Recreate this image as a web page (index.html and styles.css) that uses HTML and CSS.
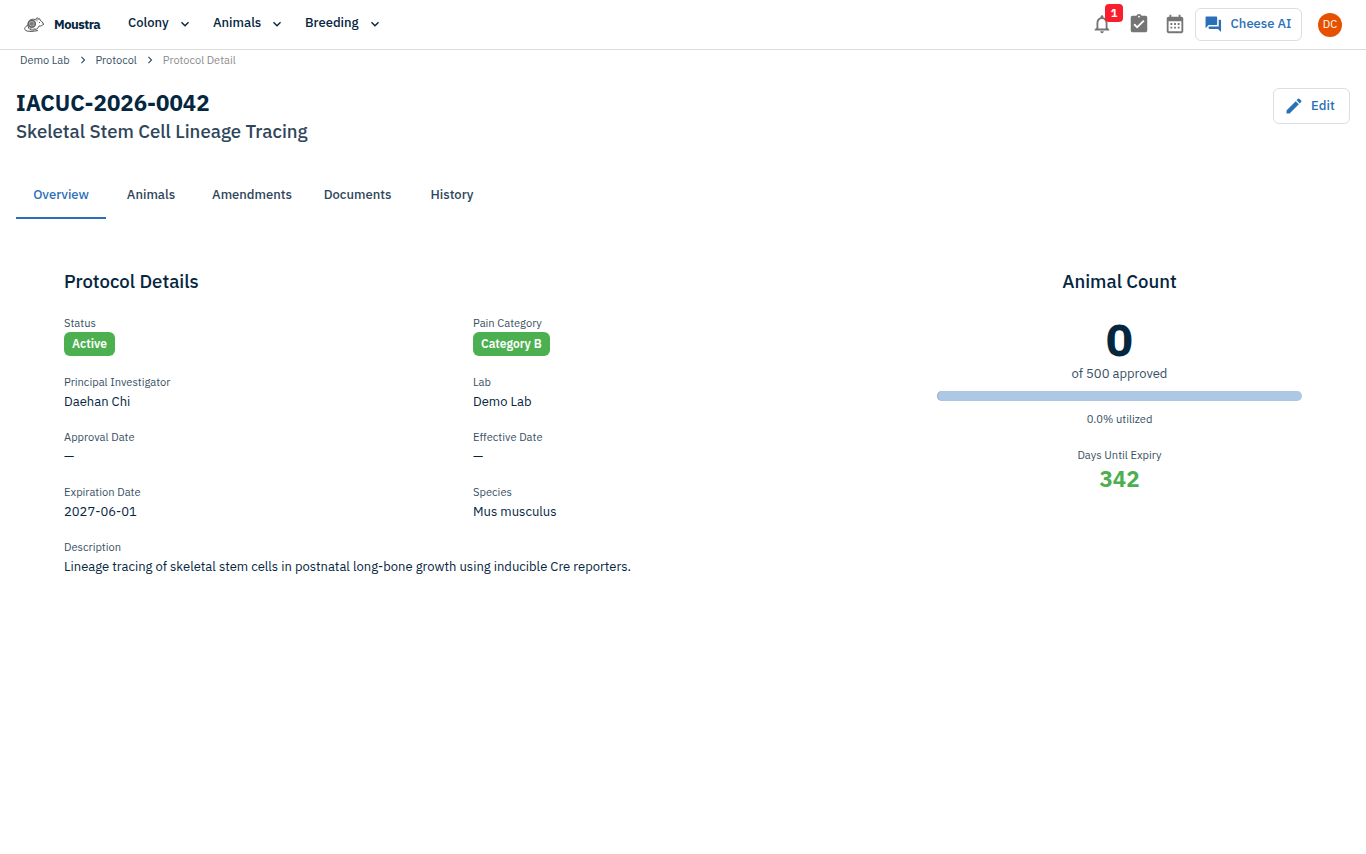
FILE: index.html
```html
<!DOCTYPE html>
<html lang="en">
<head>
    <meta charset="UTF-8">
    <meta name="viewport" content="width=device-width, initial-scale=1.0">
    <title>Protocol Detail - Moustra</title>
    <link rel="stylesheet" href="styles.css">
</head>
<body>
    <header class="navbar">
        <a class="brand" href="#">
            <svg class="logo" viewBox="0 0 20 16" fill="none" stroke="#555" stroke-width="1">
                <path d="M4.200 9.500C3.200 4.500 7 1.200 11 2.500c1.200.3 2 .8 2.500 1.300M14 2.500c.6-1.500 2-1.400 2 .6 1.800 1 3 2.700 3.500 4.200-.9 1.300-2.500 1.700-4.500 1.800-1 2.600-3 3.700-6 3.900-2.500.2-4.500-.8-4.800-3.500M4 8C1 9.500-.2 12 1.500 13.300c2.500 1.700 8 1.200 12.500.2M12 2c.4-1.600 2.300-1.500 2.200.5"/>
                <path d="M5.500 11c2 1.500 4 1.500 6 .3" stroke="#999"/>
                <circle cx="7.800" cy="6.800" r="3.500" fill="#aaa" stroke="#666" stroke-width="1.500"/>
                <circle cx="7.800" cy="6.800" r="1.300" fill="#777" stroke="#777"/>
                <circle cx="15.500" cy="5.500" r=".5" fill="#333" stroke="none"/>
                <circle cx="19.200" cy="7" r=".6" fill="#333" stroke="none"/>
            </svg>
            <span>Moustra</span>
        </a>
        <nav class="menu">
            <button class="menu-item colony">Colony <svg class="chevron" viewBox="0 0 24 24"><path d="M7.410 8.590 12 13.170l4.590-4.580L18 10l-6 6-6-6z"/></svg></button>
            <button class="menu-item animals">Animals <svg class="chevron" viewBox="0 0 24 24"><path d="M7.410 8.590 12 13.170l4.590-4.580L18 10l-6 6-6-6z"/></svg></button>
            <button class="menu-item breeding">Breeding <svg class="chevron" viewBox="0 0 24 24"><path d="M7.410 8.590 12 13.170l4.590-4.580L18 10l-6 6-6-6z"/></svg></button>
        </nav>
        <div class="actions">
            <button class="icon-btn">
                <svg viewBox="0 0 24 24"><path d="M12 22c1.100 0 2-.9 2-2h-4c0 1.100.9 2 2 2m6-6v-5c0-3.070-1.630-5.640-4.500-6.320V4c0-.83-.67-1.500-1.500-1.500s-1.500.67-1.500 1.500v.68C7.640 5.360 6 7.920 6 11v5l-2 2v1h16v-1zm-2 1H8v-6c0-2.480 1.510-4.500 4-4.500s4 2.020 4 4.500z"/></svg>
                <span class="badge">1</span>
            </button>
            <button class="icon-btn">
                <svg viewBox="0 0 24 24"><path d="M19 3h-4.180C14.400 1.840 13.300 1 12 1s-2.400.84-2.820 2H5c-1.100 0-2 .9-2 2v14c0 1.100.9 2 2 2h14c1.100 0 2-.9 2-2V5c0-1.100-.9-2-2-2m-7 0c.55 0 1 .45 1 1s-.45 1-1 1-1-.45-1-1 .45-1 1-1m-2 14-4-4 1.410-1.410L10 14.170l6.590-6.590L18 9z"/></svg>
            </button>
            <button class="icon-btn">
                <svg viewBox="0 0 24 24"><path d="M19 4h-1V2h-2v2H8V2H6v2H5c-1.110 0-2 .9-2 2v14c0 1.100.89 2 2 2h14c1.100 0 2-.9 2-2V6c0-1.100-.9-2-2-2m0 16H5V9h14zM7 11h2v2H7zm4 0h2v2h-2zm4 0h2v2h-2zm-8 4h2v2H7zm4 0h2v2h-2zm4 0h2v2h-2z"/></svg>
            </button>
            <button class="btn cheese">
                <svg viewBox="0 0 24 24"><path d="M21 6h-2v9H6v2c0 .55.45 1 1 1h11l4 4V7c0-.55-.45-1-1-1m-4 6V3c0-.55-.45-1-1-1H3c-.55 0-1 .45-1 1v14l4-4h10c.55 0 1-.45 1-1"/></svg>
                <span>Cheese AI</span>
            </button>
            <div class="avatar">DC</div>
        </div>
    </header>

    <main>
        <div class="breadcrumb">
            <a href="#">Demo Lab</a>
            <svg class="separator" viewBox="0 0 24 24"><path d="M10 6 8.590 7.410 13.170 12l-4.580 4.590L10 18l6-6z"/></svg>
            <a href="#">Protocol</a>
            <svg class="separator" viewBox="0 0 24 24"><path d="M10 6 8.590 7.410 13.170 12l-4.580 4.590L10 18l6-6z"/></svg>
            <span class="current">Protocol Detail</span>
        </div>

        <div class="page-header">
            <div>
                <h1>IACUC-2026-0042</h1>
                <p class="subtitle">Skeletal Stem Cell Lineage Tracing</p>
            </div>
            <button class="btn edit">
                <svg viewBox="0 0 24 24"><path d="M3 17.250V21h3.750L17.810 9.940l-3.750-3.750zM20.710 7.040c.39-.39.39-1.020 0-1.410l-2.340-2.340a.996.996 0 0 0-1.410 0l-1.830 1.830 3.750 3.750z"/></svg>
                <span>Edit</span>
            </button>
        </div>

        <div class="tabs">
            <button class="tab active">Overview</button>
            <button class="tab">Animals</button>
            <button class="tab wide">Amendments</button>
            <button class="tab docs">Documents</button>
            <button class="tab">History</button>
        </div>

        <div class="content">
            <section>
                <h2>Protocol Details</h2>
                <div class="details">
                    <div class="field">
                        <span class="label">Status</span>
                        <span class="chip">Active</span>
                    </div>
                    <div class="field">
                        <span class="label">Pain Category</span>
                        <span class="chip">Category B</span>
                    </div>
                    <div class="field">
                        <span class="label">Principal Investigator</span>
                        <span class="value">Daehan Chi</span>
                    </div>
                    <div class="field">
                        <span class="label">Lab</span>
                        <span class="value">Demo Lab</span>
                    </div>
                    <div class="field">
                        <span class="label">Approval Date</span>
                        <span class="value">—</span>
                    </div>
                    <div class="field">
                        <span class="label">Effective Date</span>
                        <span class="value">—</span>
                    </div>
                    <div class="field">
                        <span class="label">Expiration Date</span>
                        <span class="value">2027-06-01</span>
                    </div>
                    <div class="field">
                        <span class="label">Species</span>
                        <span class="value">Mus musculus</span>
                    </div>
                    <div class="field full">
                        <span class="label">Description</span>
                        <span class="value">Lineage tracing of skeletal stem cells in postnatal long-bone growth using inducible Cre reporters.</span>
                    </div>
                </div>
            </section>

            <section class="count">
                <h2>Animal Count</h2>
                <div class="total">0</div>
                <div class="approved">of 500 approved</div>
                <div class="progress"></div>
                <div class="label utilized">0.0% utilized</div>
                <div class="label expiry">Days Until Expiry</div>
                <div class="days">342</div>
            </section>
        </div>
    </main>
</body>
</html>
```
FILE: styles.css
```css
* {
    box-sizing: border-box;
}
body {
    font-family: "IBM Plex Sans", Roboto, sans-serif;
    margin: 0;
    background: #fff;
    color: #05263f;
    font-size: 13px;
}
h1, h2, p {
    margin: 0;
}
a {
    color: inherit;
    text-decoration: none;
}
button {
    font: inherit;
    color: inherit;
    background: none;
    border: none;
    padding: 0;
    cursor: pointer;
}
svg {
    display: block;
    fill: currentColor;
    flex-shrink: 0;
}
.navbar {
    display: flex;
    align-items: center;
    height: 50px;
    padding: 0 24px;
    border-bottom: 1px solid #dcdcdc;
}
.brand {
    display: flex;
    align-items: center;
    gap: 10px;
    width: 104px;
    font-weight: 700;
    letter-spacing: -0.5px;
}
.logo {
    width: 20px;
    height: 16px;
    fill: none;
}
.menu {
    display: flex;
    padding-bottom: 4px;
}
.menu-item {
    display: flex;
    align-items: center;
    justify-content: space-between;
    font-weight: 500;
}
.menu-item.colony {
    width: 65px;
    margin-right: 20px;
}
.menu-item.animals {
    width: 72px;
    margin-right: 20px;
}
.menu-item.breeding {
    width: 78px;
}
.chevron {
    width: 16px;
    height: 16px;
    position: relative;
    top: 1px;
}
.actions {
    display: flex;
    align-items: center;
    margin-left: auto;
}
.icon-btn {
    position: relative;
    width: 22px;
    height: 22px;
    margin-right: 14px;
    margin-bottom: 1px;
    color: #757575;
}
.icon-btn:first-child {
    margin-right: 15px;
}
.badge {
    position: absolute;
    top: -9px;
    left: 14px;
    width: 18px;
    height: 18px;
    line-height: 18px;
    background: #fa1e2d;
    color: #fff;
    border-radius: 4px;
    font-size: 11px;
    font-weight: 700;
}
.btn {
    display: flex;
    align-items: center;
    border: 1px solid #dadfe5;
    border-radius: 6px;
    color: #2a70b8;
    font-weight: 500;
}
.btn span {
    margin-bottom: 2px;
}
.cheese {
    width: 107px;
    height: 33px;
    margin: 0 16px 0 -5px;
    padding-left: 8px;
    gap: 8px;
}
.cheese svg {
    width: 18.600px;
    height: 18.600px;
}
.avatar {
    width: 24px;
    height: 24px;
    line-height: 23px;
    border-radius: 50%;
    background: #e65100;
    color: #fff;
    font-size: 11.140px;
    text-align: center;
}
main {
    padding: 0 16px;
}
.breadcrumb {
    display: flex;
    align-items: center;
    height: 20px;
    padding-left: 4px;
    color: #374f64;
    font-size: 11px;
}
.separator {
    width: 14px;
    height: 14px;
    margin: 0 6px;
}
.current {
    color: #8c8c8c;
}
.page-header {
    display: flex;
    justify-content: space-between;
    align-items: flex-start;
    height: 101px;
    padding-top: 18px;
}
h1 {
    font-size: 22.300px;
    line-height: 30px;
    font-weight: 700;
}
.subtitle {
    color: #2f465a;
    font-size: 18.570px;
    line-height: 27px;
    font-weight: 500;
}
.edit {
    width: 77px;
    height: 36px;
    padding-left: 10px;
    gap: 7px;
    letter-spacing: 0.1px;
}
.edit svg {
    width: 20px;
    height: 20px;
}
.tabs {
    display: flex;
    height: 48px;
}
.tab {
    width: 90px;
    border-bottom: 2px solid transparent;
    color: #2f465a;
    font-weight: 500;
}
.tab.active {
    color: #2a70b8;
    border-color: #2a70b8;
}
.tab.wide {
    width: 112px;
}
.tab.docs {
    width: 99px;
}
.content {
    display: grid;
    grid-template-columns: 794px 365px;
    justify-content: space-between;
    padding: 48px 48px 0;
}
h2 {
    font-size: 18.570px;
    line-height: 29px;
    font-weight: 500;
}
.details {
    display: grid;
    grid-template-columns: 1fr 1fr;
    gap: 16px 24px;
    margin-top: 18px;
}
.field {
    display: flex;
    flex-direction: column;
    align-items: flex-start;
}
.label {
    color: #374f64;
    font-size: 11.140px;
    line-height: 18px;
}
.value {
    height: 21px;
    line-height: 21px;
}
.full {
    grid-column: 1 / 3;
}
.chip {
    height: 24px;
    line-height: 24px;
    padding: 0 8px;
    margin-bottom: 1px;
    border-radius: 6px;
    background: #4caf50;
    color: #fff;
    font-size: 12px;
    font-weight: 600;
}
.count {
    text-align: center;
}
.total {
    margin-top: 15px;
    font-size: 44.600px;
    line-height: 56px;
    font-weight: 700;
}
.approved {
    color: #374f64;
    line-height: 20px;
    margin-top: -3px;
    margin-bottom: 7px;
}
.progress {
    height: 10px;
    border-radius: 5px;
    background: #adc8e4;
    box-shadow: inset 1px 0 #8fb2d6;
}
.utilized {
    margin-top: 9px;
}
.expiry {
    margin-top: 18px;
}
.days {
    color: #4caf50;
    font-size: 22.300px;
    line-height: 30px;
    font-weight: 700;
}
```
